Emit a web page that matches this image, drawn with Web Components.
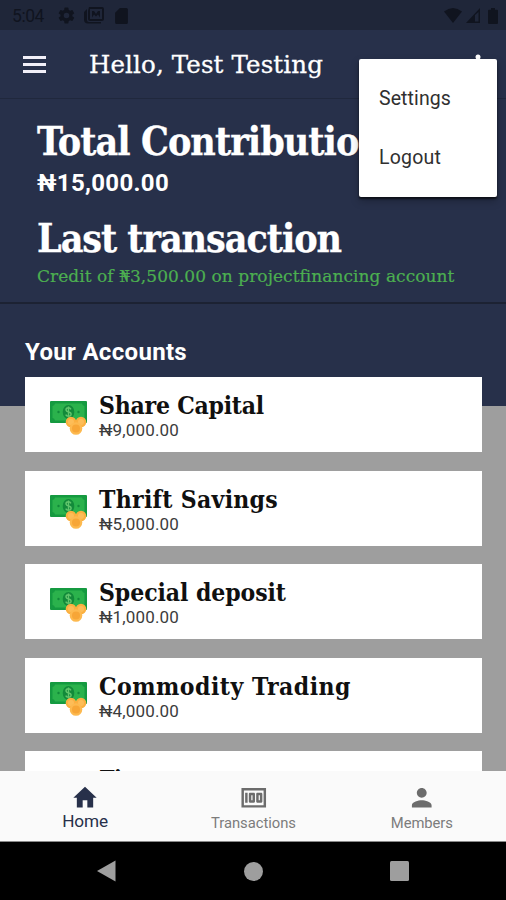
<!DOCTYPE html>
<html lang="en">
<head>
<meta charset="utf-8">
<title>Home</title>
<style>
  html, body { margin: 0; height: 100%; overflow: hidden; }
</style>
</head>
<body>

<coop-home>
  <status-bar slot="status" time="5:04"></status-bar>
  <app-bar slot="bar">Hello, Test Testing</app-bar>
  <summary-panel slot="summary"></summary-panel>
  <account-list slot="accounts" heading="Your Accounts">
    <account-card name="Share Capital" amount="₦9,000.00" fit="165"></account-card>
    <account-card name="Thrift Savings" amount="₦5,000.00" fit="179"></account-card>
    <account-card name="Special deposit" amount="₦1,000.00" fit="187"></account-card>
    <account-card name="Commodity Trading" amount="₦4,000.00" fit="252"></account-card>
    <account-card name="Fi" amount="" fit="22"></account-card>
  </account-list>
  <tab-bar slot="tabs"></tab-bar>
  <system-nav slot="system"></system-nav>
  <popup-menu slot="menu">
    <menu-item fit="72">Settings</menu-item>
    <menu-item fit="62">Logout</menu-item>
  </popup-menu>
</coop-home>

<template id="coop-home">
  <style>
    :host {
      display: flex; flex-direction: column; position: relative;
      width: 506px; height: 900px; overflow: hidden;
      background: #9e9e9e; color: #fff;
      font-family: Roboto, sans-serif;
      --navy: #27304a;
      --serif: "DejaVu Serif", serif;
      --serif-narrow: "DejaVu Serif Condensed", "DejaVu Serif", serif;
    }
    main {
      flex: 1; min-height: 0; overflow: hidden;
      background: linear-gradient(var(--navy) 307px, #9e9e9e 307px);
    }
    .menu { position: absolute; left: 359px; top: 59px; width: 138px; }
  </style>
  <slot name="status"></slot>
  <slot name="bar"></slot>
  <main>
    <slot name="summary"></slot>
    <slot name="accounts"></slot>
  </main>
  <slot name="tabs"></slot>
  <slot name="system"></slot>
  <div class="menu"><slot name="menu"></slot></div>
</template>

<template id="fit-text">
  <style>
    :host { display: block; white-space: nowrap; }
    span { display: inline-block; }
  </style>
  <span><slot></slot></span>
</template>

<template id="status-bar">
  <style>
    :host {
      display: flex; align-items: center; box-sizing: border-box;
      height: 30px; padding: 1px 8px 0 12px;
      background: #1f2639; color: #10141f; font-size: 17.5px;
    }
    .time { width: 45px; }
    svg { fill: currentColor; display: block; }
    .gap { flex: 1; }
  </style>
  <fit-text class="time" width="32"></fit-text>
  <svg style="margin-right:8px" width="19" height="19" viewBox="0 0 24 24"><path d="M19.4 13a7.5 7.5 0 0 0 0-2l2.1-1.6c.2-.2.3-.4.1-.7l-2-3.4c-.1-.2-.4-.3-.6-.2l-2.5 1a7.3 7.3 0 0 0-1.7-1l-.4-2.6a.5.5 0 0 0-.5-.5h-4a.5.5 0 0 0-.5.5L9 5.1a7.3 7.3 0 0 0-1.7 1l-2.5-1c-.2-.1-.5 0-.6.2l-2 3.4c-.1.3-.1.5.1.7L4.5 11a7.5 7.5 0 0 0 0 2l-2.2 1.6c-.2.2-.2.4-.1.7l2 3.4c.1.2.4.3.6.2l2.5-1a7.3 7.3 0 0 0 1.7 1l.4 2.6c0 .3.2.5.5.5h4c.3 0 .5-.2.5-.5l.4-2.6a7.3 7.3 0 0 0 1.7-1l2.5 1c.2.1.5 0 .6-.2l2-3.4c.1-.2.1-.5-.1-.7zM12 15.5a3.5 3.5 0 1 1 0-7 3.5 3.5 0 0 1 0 7z"/></svg>
  <svg style="margin-right:11px" width="20" height="17" viewBox="0 0 20 17"><path fill-rule="evenodd" d="M5 0h13q2 0 2 2v10q0 2-2 2H6q-2 0-2-2V4zm1 2v10h12V2zM8 10.5V4h2l2 3 2-3h2v6.5l-2-3-2 2-2-2zM0 5l3-3v11q0 2 2 2h12v1.500H4q-4 0-4-4z"/></svg>
  <svg width="13" height="16" viewBox="0 0 16 20"><path d="M14 0H6L0 6v12c0 1.100.9 2 2 2h12c1.100 0 2-.9 2-2V2c0-1.100-.9-2-2-2z"/></svg>
  <div class="gap"></div>
  <svg style="margin-right:4px" width="18" height="15" viewBox="0 0 18 15"><path d="M9 15 0 3.500Q9-3.500 18 3.500z"/></svg>
  <svg style="margin-right:8px" width="14" height="15" viewBox="0 0 14 15"><path fill-rule="evenodd" d="M14 0v15H0zM9 7v6.500h3.500V4z"/></svg>
  <svg width="10" height="16" viewBox="0 0 10 16"><path d="M3 0h4v1.800h2q1 0 1 1V15q0 1-1 1H1q-1 0-1-1V2.800q0-1 1-1h2z"/></svg>
</template>

<template id="app-bar">
  <style>
    :host {
      display: flex; align-items: center; box-sizing: border-box;
      height: 69px; padding: 0 16px 0 23px;
      background: var(--navy); border-bottom: 1px solid #20283d;
    }
    .burger { display: grid; gap: 4px; width: 23px; margin-right: 43px; }
    .burger i { height: 3px; background: #f1eff8; }
    fit-text {
      flex: 1; font: 24.5px/30px var(--serif); margin-top: 2px;
      -webkit-text-stroke: .3px currentColor;
    }
    svg { fill: #fff; margin: 2px 4px 0 0; }
  </style>
  <div class="burger"><i></i><i></i><i></i></div>
  <fit-text width="234"><slot></slot></fit-text>
  <svg width="16" height="22" viewBox="0 0 16 22"><circle cx="8" cy="3" r="2.500"/><circle cx="8" cy="11" r="2.500"/><circle cx="8" cy="19" r="2.500"/></svg>
</template>

<template id="summary-panel">
  <style>
    :host {
      display: flow-root; box-sizing: border-box; height: 205px; padding: 18px 0 0 37px;
      border-bottom: 2px solid #1c2233;
    }
    .head {
      font: bold 39px/48px var(--serif-narrow);
      -webkit-text-stroke: .3px currentColor;
    }
    .total { font: bold 24px/32px Roboto, sans-serif; margin: 2px 0 15px; }
    .credit {
      font: 17px/24px var(--serif); color: #4caf50; margin-top: 2px;
      -webkit-text-stroke: .2px currentColor;
    }
  </style>
  <fit-text class="head" width="346">Total Contribution</fit-text>
  <fit-text class="total" width="132">₦15,000.00</fit-text>
  <fit-text class="head" width="304">Last transaction</fit-text>
  <fit-text class="credit" width="417">Credit of ₦3,500.00 on projectfinancing account</fit-text>
</template>

<template id="account-list">
  <style>
    :host { display: block; padding: 31px 24px 0 25px; }
    .title { font: bold 24px/34px Roboto, sans-serif; margin-bottom: 8px; }
    .cards { display: grid; gap: 18.6px; }
  </style>
  <fit-text class="title" width="162"></fit-text>
  <div class="cards"><slot></slot></div>
</template>

<template id="account-card">
  <style>
    :host {
      display: flex; box-sizing: border-box; height: 75px; padding-left: 25px;
      background: #fff; color: #101010;
    }
    svg { margin: 24px 12px 0 0; }
    .name { font: bold 24.5px/30px var(--serif-narrow); margin-top: 14px; }
    .amount { font: 17px/20px Roboto, sans-serif; color: #3c3c3c; margin-top: -1px; }
  </style>
  <svg width="37" height="35" viewBox="0 0 37 35">
    <rect width="37" height="22" rx="1" fill="#159a40"/>
    <path fill="#2bb24c" d="M5 2.500h27a3 3 0 0 0 2.500 2.500v12a3 3 0 0 0-2.500 2.500H5A3 3 0 0 0 2.500 17V5A3 3 0 0 0 5 2.500z"/>
    <ellipse cx="18.500" cy="11" rx="5.800" ry="7" fill="#128a3a"/>
    <path d="M21 8.300q-1-1.700-2.800-1.500-2.400.3-2.200 2.200.3 1.500 2.500 2 2.700.5 2.600 2.300-.2 1.800-2.500 1.900-2 .1-2.900-1.600M18.500 5.500v11" fill="none" stroke="#62c66c" stroke-width="1.400"/>
    <circle cx="8.500" cy="11" r="1.200" fill="#128a3a"/><circle cx="28.500" cy="11" r="1.200" fill="#128a3a"/>
    <circle cx="21" cy="21" r="5.300" fill="#fbb040"/><circle cx="31" cy="21" r="5.300" fill="#fbb040"/>
    <circle cx="21" cy="21" r="3" fill="#fdbd58"/><circle cx="31" cy="21" r="3" fill="#fdbd58"/>
    <circle cx="26" cy="27.500" r="6.300" fill="#fdb94f"/><circle cx="26" cy="27.500" r="4" fill="#f7a637"/>
  </svg>
  <div>
    <fit-text class="name"></fit-text>
    <fit-text class="amount" width="80"></fit-text>
  </div>
</template>

<template id="tab-bar">
  <style>
    :host {
      display: grid; grid-template-columns: repeat(3, 1fr); box-sizing: border-box;
      height: 71px; background: #fafafa; color: #7c7c7c; border-bottom: 1px solid #8a8a8a;
      padding-left: 1px;
    }
    .tab { display: flex; flex-direction: column; align-items: center; padding-top: 11.5px; }
    svg { fill: #6c6c6c; display: block; }
    fit-text { font-size: 14.8px; line-height: 20px; margin-top: 1px; }
    .active { color: #27304a; }
    .active svg { fill: #27304a; }
    .active fit-text { font-size: 17.2px; margin-top: -1px; }
  </style>
  <div class="tab active">
    <svg width="28" height="29.500" viewBox="0 0 24 24" preserveAspectRatio="none"><path d="M10 20v-6h4v6h5v-8h3L12 3 2 12h3v8z"/></svg>
    <fit-text width="46">Home</fit-text>
  </div>
  <div class="tab">
    <svg width="29.500" height="29.500" viewBox="0 0 24 24"><path fill-rule="evenodd" d="M5 8h2v8H5zm7 0H9c-.55 0-1 .45-1 1v6c0 .55.45 1 1 1h3c.55 0 1-.45 1-1V9c0-.55-.45-1-1-1zm-1 6h-1v-4h1zm7-6h-3c-.55 0-1 .45-1 1v6c0 .55.45 1 1 1h3c.55 0 1-.45 1-1V9c0-.55-.45-1-1-1zm-1 6h-1v-4h1zM2 4v16h20V4zm2 14V6h16v12z"/></svg>
    <fit-text width="85">Transactions</fit-text>
  </div>
  <div class="tab">
    <svg width="29.500" height="29.500" viewBox="0 0 24 24"><path d="M12 12c2.210 0 4-1.790 4-4s-1.790-4-4-4-4 1.790-4 4 1.790 4 4 4zm0 2c-2.670 0-8 1.340-8 4v2h16v-2c0-2.660-5.330-4-8-4z"/></svg>
    <fit-text width="62">Members</fit-text>
  </div>
</template>

<template id="system-nav">
  <style>
    :host {
      display: flex; justify-content: space-between; align-items: center; box-sizing: border-box;
      height: 58px; padding: 0 97px 0 97px; background: #000;
    }
    svg { fill: #9e9e9e; }
  </style>
  <svg width="19" height="22" viewBox="0 0 19 22"><path d="M18.500 .5v21L0 11z"/></svg>
  <svg width="19" height="19" viewBox="0 0 19 19"><circle cx="9.500" cy="9.500" r="9.500"/></svg>
  <svg width="19" height="20" viewBox="0 0 19 20"><rect width="19" height="20" rx="1.500"/></svg>
</template>

<template id="popup-menu">
  <style>
    :host {
      display: block; box-sizing: border-box; height: 138px; padding: 10px 0;
      background: #fff; color: #303030; border-radius: 2px;
      box-shadow: 0 2px 2px rgba(0, 0, 0, .6), 0 4px 8px rgba(0, 0, 0, .25);
    }
  </style>
  <slot></slot>
</template>

<template id="menu-item">
  <style>
    :host { display: flex; align-items: center; height: 59px; padding-left: 20px; font-size: 19.5px; }
  </style>
  <fit-text><slot></slot></fit-text>
</template>

<script>
  // Clones the template that shares the element's tag name
  class TemplateElement extends HTMLElement {
    constructor() {
      super();
      const template = document.getElementById(this.localName);
      this.attachShadow({mode: "open"}).appendChild(template.content.cloneNode(true));
    }

    $(selector) {
      return this.shadowRoot.querySelector(selector);
    }
  }

  // Usage: <fit-text width="120">Label</fit-text>
  // Tracks the letters so that the line is `width` pixels wide.
  class FitText extends TemplateElement {
    static get observedAttributes() {
      return ["width"];
    }

    connectedCallback() {
      requestAnimationFrame(() => this.fit());
      this.fit();
    }

    attributeChangedCallback() {
      this.fit();
    }

    fit() {
      const span = this.$("span");
      const text = this.label();
      const width = Number(this.getAttribute("width"));
      if (!width || !text.length || !this.isConnected) return;
      span.style.letterSpacing = "0px";
      const natural = span.getBoundingClientRect().width;
      if (natural) span.style.letterSpacing = (width - natural) / text.length + "px";
    }

    label() {
      const nodes = this.$("slot").assignedNodes({flatten: true});
      return nodes.map((node) => node.textContent).join("").trim();
    }
  }

  class StatusBar extends TemplateElement {
    connectedCallback() {
      this.$(".time").textContent = this.getAttribute("time");
    }
  }

  class AccountList extends TemplateElement {
    connectedCallback() {
      this.$(".title").textContent = this.getAttribute("heading");
    }
  }

  class AccountCard extends TemplateElement {
    connectedCallback() {
      this.$(".name").textContent = this.getAttribute("name");
      this.$(".amount").textContent = this.getAttribute("amount");
      this.$(".name").setAttribute("width", this.getAttribute("fit"));
    }
  }

  class MenuItem extends TemplateElement {
    connectedCallback() {
      this.$("fit-text").setAttribute("width", this.getAttribute("fit"));
    }
  }

  customElements.define("coop-home", class extends TemplateElement {});
  customElements.define("status-bar", StatusBar);
  customElements.define("app-bar", class extends TemplateElement {});
  customElements.define("summary-panel", class extends TemplateElement {});
  customElements.define("account-list", AccountList);
  customElements.define("account-card", AccountCard);
  customElements.define("tab-bar", class extends TemplateElement {});
  customElements.define("system-nav", class extends TemplateElement {});
  customElements.define("popup-menu", class extends TemplateElement {});
  customElements.define("menu-item", MenuItem);
  customElements.define("fit-text", FitText);

  // every ancestor has its styles by now
  document.querySelectorAll("*").forEach(function refit(el) {
    if (el.fit) el.fit();
    if (el.shadowRoot) el.shadowRoot.querySelectorAll("*").forEach(refit);
  });
</script>
</body>
</html>
